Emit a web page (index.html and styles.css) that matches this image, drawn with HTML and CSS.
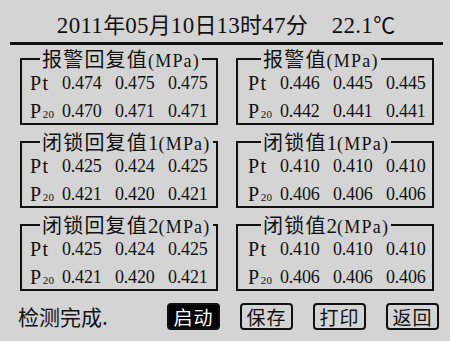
FILE: index.html
```html
<!DOCTYPE html>
<html lang="zh-CN">
<head>
<meta charset="utf-8">
<title>检测</title>
<link rel="stylesheet" href="styles.css">
</head>
<body>
<div class="screen">
  <div class="header"><span class="num">2011</span>年<span class="num">05</span>月<span class="num">10</span>日<span class="num">13</span>时<span class="num">47</span>分<span class="temp"><span class="num">22.1</span>℃</span></div>
  <div class="rule"></div>
  <div class="panels">
    <fieldset class="box left">
      <legend>报警回复值<span class="unit">(MPa)</span></legend>
      <div class="row"><span class="lbl">Pt</span><span>0.474</span><span>0.475</span><span>0.475</span></div>
      <div class="row"><span class="lbl">P<span class="sub">20</span></span><span>0.470</span><span>0.471</span><span>0.471</span></div>
    </fieldset>
    <fieldset class="box right">
      <legend>报警值<span class="unit">(MPa)</span></legend>
      <div class="row"><span class="lbl">Pt</span><span>0.446</span><span>0.445</span><span>0.445</span></div>
      <div class="row"><span class="lbl">P<span class="sub">20</span></span><span>0.442</span><span>0.441</span><span>0.441</span></div>
    </fieldset>
    <fieldset class="box left">
      <legend>闭锁回复值<span class="digit">1</span><span class="unit">(MPa)</span></legend>
      <div class="row"><span class="lbl">Pt</span><span>0.425</span><span>0.424</span><span>0.425</span></div>
      <div class="row"><span class="lbl">P<span class="sub">20</span></span><span>0.421</span><span>0.420</span><span>0.421</span></div>
    </fieldset>
    <fieldset class="box right">
      <legend>闭锁值<span class="digit">1</span><span class="unit">(MPa)</span></legend>
      <div class="row"><span class="lbl">Pt</span><span>0.410</span><span>0.410</span><span>0.410</span></div>
      <div class="row"><span class="lbl">P<span class="sub">20</span></span><span>0.406</span><span>0.406</span><span>0.406</span></div>
    </fieldset>
    <fieldset class="box left">
      <legend>闭锁回复值<span class="digit">2</span><span class="unit">(MPa)</span></legend>
      <div class="row"><span class="lbl">Pt</span><span>0.425</span><span>0.424</span><span>0.425</span></div>
      <div class="row"><span class="lbl">P<span class="sub">20</span></span><span>0.421</span><span>0.420</span><span>0.421</span></div>
    </fieldset>
    <fieldset class="box right">
      <legend>闭锁值<span class="digit">2</span><span class="unit">(MPa)</span></legend>
      <div class="row"><span class="lbl">Pt</span><span>0.410</span><span>0.410</span><span>0.410</span></div>
      <div class="row"><span class="lbl">P<span class="sub">20</span></span><span>0.406</span><span>0.406</span><span>0.406</span></div>
    </fieldset>
  </div>
  <div class="footer">
    <span class="status">检测完成.</span>
    <div class="buttons">
      <span class="btn active">启动</span>
      <span class="btn">保存</span>
      <span class="btn">打印</span>
      <span class="btn">返回</span>
    </div>
  </div>
</div>
</body>
</html>
```
FILE: styles.css
```css
html, body {
  margin: 0;
  padding: 0;
  background: #d4d4d4;
}
.screen {
  width: 450px;
  height: 341px;
  overflow: hidden;
  color: #111;
  font-family: "Noto Sans CJK SC", sans-serif;
}
.header {
  box-sizing: border-box;
  height: 42px;
  padding-top: 10px;
  text-align: center;
  font-size: 22px;
  line-height: 26px;
  padding-left: 2px;
}
.num {
  font-family: "Liberation Serif", serif;
  font-size: 23px;
  letter-spacing: 0.3px;
}
.temp {
  margin-left: 24px;
}
.rule {
  height: 3px;
  background: #111;
  margin: 0 7px 0 10px;
}
.panels {
  display: grid;
  grid-template-columns: 198px 198px;
  column-gap: 18px;
  row-gap: 6px;
  padding-left: 20px;
  margin-top: 3px;
}
.box {
  box-sizing: border-box;
  width: 198px;
  min-width: 0;
  margin: 0;
  border: 2px solid #111;
  padding: 1px 0 0 8px;
  display: flex;
  flex-direction: column;
  gap: 4px;
}
.box.right {
  padding-left: 10px;
}
legend {
  height: 22px;
  line-height: 22px;
  font-size: 20px;
  letter-spacing: 1.2px;
  padding: 0 2px;
  margin-left: 10px;
  white-space: nowrap;
}
.box.right legend {
  margin-left: 13px;
}
.unit {
  font-family: "Liberation Serif", serif;
  font-size: 18px;
  letter-spacing: 1.2px;
}
.digit {
  font-family: "Liberation Serif", serif;
  font-size: 21px;
  letter-spacing: 0;
}
.row {
  display: grid;
  grid-template-columns: 32px 53px 53px 53px;
  height: 24px;
  line-height: 24px;
  font-family: "Liberation Serif", serif;
  font-size: 18px;
  letter-spacing: -0.2px;
}
.lbl {
  font-size: 20px;
  letter-spacing: 1.5px;
}
.sub {
  font-size: 11px;
  letter-spacing: 0.3px;
}
.footer {
  display: flex;
  align-items: center;
  margin-top: 12px;
  padding: 0 11px 0 18px;
  height: 27px;
}
.status {
  flex: 1;
  font-size: 21px;
  line-height: 27px;
}
.buttons {
  display: flex;
  gap: 20px;
}
.btn {
  box-sizing: border-box;
  width: 53px;
  height: 27px;
  border: 2px solid #111;
  border-radius: 4px;
  font-size: 19px;
  line-height: 23px;
  text-align: center;
  letter-spacing: 1px;
}
.btn.active {
  background: #000;
  color: #fff;
}
```
